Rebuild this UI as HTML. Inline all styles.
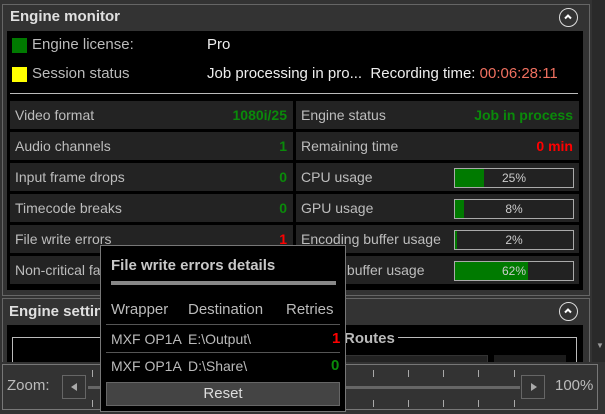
<!DOCTYPE html><html><head><style>
*{margin:0;padding:0;box-sizing:border-box}
body{width:605px;height:414px;background:#333;position:relative;overflow:hidden;font-family:"Liberation Sans",sans-serif;font-size:14px;color:#c8c8c8}
.a{position:absolute}
.cell{position:absolute;background:#232323;height:28px;width:283px;line-height:28px;padding-left:5px;font-size:14px;color:#bdbdbd}
.v{position:absolute;right:6px;top:0;font-weight:bold}
.bar{position:absolute;left:158px;top:5px;width:120px;height:20px;border:1px solid #aaa;background:#222;text-align:center;line-height:18px;font-size:12px;color:#ccc}
.bar i{position:absolute;left:0;top:0;bottom:0;background:#007a00}
.bar span{position:relative}
.circ{position:absolute;width:19px;height:19px;border:1.5px solid #ddd;border-radius:50%}
.tick{position:absolute;width:1px;height:7px;background:#aaa}
</style></head><body>
<div class="a" style="left:592px;top:0;width:13px;height:414px;background:#2a2a2a"></div>
<div class="a" style="left:2px;top:4px;width:588px;height:292px;border:1px solid #666;background:#333"></div>
<div class="a" style="left:10px;top:8px;font-weight:bold;font-size:15px;color:#e0e0e0">Engine monitor</div>
<div class="circ" style="left:559px;top:8px"><svg width="16" height="16" class="a" style="left:0;top:0"><path d="M5 9.5L8 6.5L11 9.5" stroke="#fff" stroke-width="2" fill="none"/></svg></div>
<div class="a" style="left:7px;top:31px;width:576px;height:259px;background:#000"></div>
<div class="a" style="left:12px;top:38px;width:15px;height:15px;background:#007a00"></div>
<div class="a" style="left:32px;top:36px;font-size:15px;color:#bbb">Engine license:</div>
<div class="a" style="left:207px;top:36px;font-size:15px;color:#eee">Pro</div>
<div class="a" style="left:12px;top:67px;width:15px;height:15px;background:#ff0"></div>
<div class="a" style="left:32px;top:65px;font-size:15px;color:#bbb">Session status</div>
<div class="a" style="left:207px;top:65px;font-size:15px;color:#eee">Job processing in pro...&nbsp; Recording time: <span style="color:#f07060">00:06:28:11</span></div>
<div class="a" style="left:10px;top:93px;width:568px;height:1px;background:#bbb"></div>

<div class="cell" style="left:10px;top:101px">Video format<span class="v" style="color:#0a8a0a">1080i/25</span></div>
<div class="cell" style="left:10px;top:132px">Audio channels<span class="v" style="color:#0a8a0a">1</span></div>
<div class="cell" style="left:10px;top:163px">Input frame drops<span class="v" style="color:#0a8a0a">0</span></div>
<div class="cell" style="left:10px;top:194px">Timecode breaks<span class="v" style="color:#0a8a0a">0</span></div>
<div class="cell" style="left:10px;top:225px">File write errors<span class="v" style="color:#f00">1</span></div>
<div class="cell" style="left:10px;top:256px">Non-critical failures</div>
<div class="cell" style="left:296px;top:101px">Engine status<span class="v" style="color:#0a8a0a">Job in process</span></div>
<div class="cell" style="left:296px;top:132px">Remaining time<span class="v" style="color:#f00">0 min</span></div>
<div class="cell" style="left:296px;top:163px">CPU usage<div class="bar"><i style="width:29px"></i><span>25%</span></div></div>
<div class="cell" style="left:296px;top:194px">GPU usage<div class="bar"><i style="width:9px"></i><span>8%</span></div></div>
<div class="cell" style="left:296px;top:225px">Encoding buffer usage<div class="bar"><i style="width:2px"></i><span>2%</span></div></div>
<div class="cell" style="left:296px;top:256px">Output buffer usage<div class="bar"><i style="width:73px"></i><span>62%</span></div></div>

<div class="a" style="left:2px;top:298px;width:588px;height:70px;border:1px solid #666"></div>
<div class="a" style="left:9px;top:303px;font-weight:bold;font-size:15px;color:#e0e0e0">Engine settings</div>
<div class="circ" style="left:559px;top:302px"><svg width="16" height="16" class="a" style="left:0;top:0"><path d="M5 9.5L8 6.5L11 9.5" stroke="#fff" stroke-width="2" fill="none"/></svg></div>
<div class="a" style="left:7px;top:325px;width:576px;height:45px;background:#000"></div>
<div class="a" style="left:12px;top:337px;width:290px;height:30px;border-left:1px solid #bbb;border-top:1px solid #bbb"></div>
<div class="a" style="left:344px;top:330px;font-size:15px;font-weight:bold;color:#bbb">Routes</div>
<div class="a" style="left:398px;top:337px;width:179px;height:1px;background:#bbb"></div>
<div class="a" style="left:576px;top:337px;width:1px;height:30px;background:#bbb"></div>
<div class="a" style="left:343px;top:355px;width:145px;height:12px;background:#222;border:1px solid #333"></div>
<div class="a" style="left:494px;top:355px;width:72px;height:12px;background:#1c1c1c"></div>

<div class="a" style="left:0;top:362px;width:605px;height:52px;background:#333"></div>
<div class="a" style="left:2px;top:364px;width:596px;height:46px;border:1px solid #777;background:#333"></div>
<div class="a" style="left:7px;top:377px;font-size:15px;color:#bbb">Zoom:</div>
<div class="a" style="left:62px;top:375px;width:24px;height:24px;border:1px solid #666"><svg width="22" height="22"><path d="M14 7L8 11L14 15Z" fill="#aaa"/></svg></div>
<div class="a" style="left:521px;top:375px;width:24px;height:24px;border:1px solid #666"><svg width="22" height="22"><path d="M9 7L15 11L9 15Z" fill="#aaa"/></svg></div>
<div class="a" style="left:88px;top:386px;width:432px;height:3px;background:#666"></div>
<div class="tick" style="left:92px;top:370px"></div><div class="tick" style="left:92px;top:400px"></div>
<div class="tick" style="left:373px;top:370px"></div><div class="tick" style="left:373px;top:400px"></div>
<div class="tick" style="left:408px;top:370px"></div><div class="tick" style="left:408px;top:400px"></div>
<div class="tick" style="left:443px;top:370px"></div><div class="tick" style="left:443px;top:400px"></div>
<div class="tick" style="left:478px;top:370px"></div><div class="tick" style="left:478px;top:400px"></div>
<div class="tick" style="left:514px;top:370px"></div><div class="tick" style="left:514px;top:400px"></div>
<div class="a" style="left:555px;top:377px;font-size:15px;color:#bbb">100%</div>
<div class="a" style="left:596px;top:341px;font-size:8px;color:#999">▼</div>

<div class="a" style="left:100px;top:245px;width:246px;height:167px;background:#000;border:1px solid #777"></div>
<div class="a" style="left:111px;top:257px;font-weight:bold;font-size:15px;color:#c8c8c8">File write errors details</div>
<div class="a" style="left:111px;top:281px;width:225px;height:4px;background:#888"></div>
<div class="a" style="left:111px;top:301px;font-size:15px;color:#bbb">Wrapper</div>
<div class="a" style="left:188px;top:301px;font-size:15px;color:#bbb">Destination</div>
<div class="a" style="left:286px;top:301px;font-size:15px;color:#bbb">Retries</div>
<div class="a" style="left:106px;top:324px;width:234px;height:1px;background:#555"></div>
<div class="a" style="left:111px;top:331px;font-size:14px;color:#bbb">MXF OP1A</div>
<div class="a" style="left:188px;top:331px;font-size:14px;color:#bbb">E:\Output\</div>
<div class="a" style="left:332px;top:330px;font-size:15px;font-weight:bold;color:#f00">1</div>
<div class="a" style="left:106px;top:352px;width:234px;height:1px;background:#555"></div>
<div class="a" style="left:111px;top:358px;font-size:14px;color:#bbb">MXF OP1A</div>
<div class="a" style="left:188px;top:358px;font-size:14px;color:#bbb">D:\Share\</div>
<div class="a" style="left:331px;top:357px;font-size:15px;font-weight:bold;color:#0a8a0a">0</div>
<div class="a" style="left:106px;top:382px;width:234px;height:24px;background:#444;border:1px solid #666;text-align:center;line-height:22px;font-size:15px;color:#ddd">Reset</div>
</body></html>
